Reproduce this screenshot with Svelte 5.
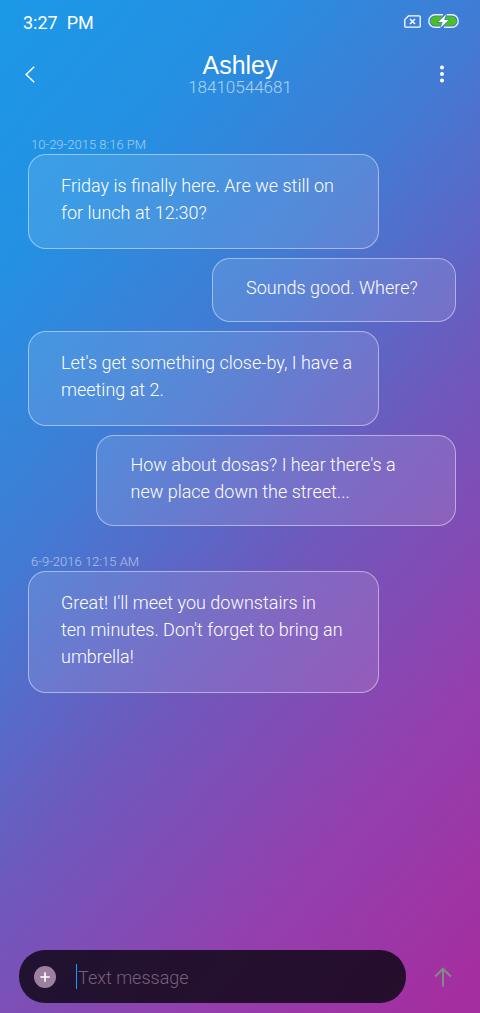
<script>
  const contact = { name: 'Ashley', phone: '18410544681' };

  const groups = [
    {
      time: '10-29-2015 8:16 PM',
      messages: [
        { text: 'Friday is finally here. Are we still on\nfor lunch at 12:30?' },
        { text: 'Sounds good. Where?', sent: true },
        { text: "Let's get something close-by, I have a\nmeeting at 2." },
        { text: "How about dosas? I hear there's a\nnew place down the street...", sent: true, wide: true }
      ]
    },
    {
      time: '6-9-2016 12:15 AM',
      messages: [
        { text: "Great! I'll meet you downstairs in\nten minutes. Don't forget to bring an\numbrella!" }
      ]
    }
  ];

  let draft = $state('');

  function handleSubmit(e) {
    e.preventDefault();
    draft = '';
  }
</script>

<div class="screen">
  <div class="status-bar">
    <span class="clock">3:27&nbsp; PM</span>
    <div class="status-icons">
      <svg width="17" height="13" viewBox="0 0 17 13" fill="none" stroke="#fff" aria-hidden="true">
        <path d="M4.600 .8H15.200a1 1 0 0 1 1 1v9.400a1 1 0 0 1-1 1H1.800a1 1 0 0 1-1-1V4.600z" stroke-width="1.300" stroke-linejoin="round" />
        <path d="M6 4l5 5M11 4L6 9" stroke-width="1.500" />
      </svg>
      <svg width="31" height="14" viewBox="0 0 31 14" fill="none" aria-hidden="true">
        <path d="M15 .8H7a6.200 6.200 0 0 0 0 12.400h6M18.500 .8H24a6.200 6.200 0 0 1 0 12.400H16" stroke="#e8f1ff" stroke-width="1.400" />
        <rect x="2.600" y="2.600" width="25.800" height="8.800" rx="4.400" fill="#4fc01a" />
        <path d="M18 .6L10.400 8h4.200l-1.800 5.600L20.600 6h-4.400z" fill="#fff" stroke="#3d80d6" stroke-width="1.400" paint-order="stroke" />
      </svg>
    </div>
  </div>

  <header class="header">
    <button class="icon-btn back" aria-label="Back">
      <svg width="10" height="17" viewBox="0 0 10 17" fill="none" stroke="#fff" stroke-width="1.500">
        <path d="M9.200 .8L1.200 8.500l8 7.700" />
      </svg>
    </button>
    <div class="contact">
      <h1>{contact.name}</h1>
      <p>{contact.phone}</p>
    </div>
    <button class="icon-btn" aria-label="More options">
      <svg width="4" height="18" viewBox="0 0 4 18" fill="#fff">
        <circle cx="2" cy="2.500" r="2" />
        <circle cx="2" cy="9" r="2" />
        <circle cx="2" cy="15.500" r="2" />
      </svg>
    </button>
  </header>

  <main class="thread">
    {#each groups as group}
      <section class="group">
        <time>{group.time}</time>
        {#each group.messages as message}
          <p class="bubble" class:sent={message.sent} class:wide={message.wide}>{message.text}</p>
        {/each}
      </section>
    {/each}
  </main>

  <form class="composer" onsubmit={handleSubmit}>
    <div class="field">
      <button type="button" aria-label="Add attachment">
        <svg width="22" height="22" viewBox="0 0 22 22">
          <circle cx="11" cy="11" r="11" fill="#9b80a0" />
          <path d="M11 6.300v9.400M6.300 11h9.400" stroke="#fff" stroke-width="1.600" />
        </svg>
      </button>
      <input type="text" placeholder="Text message" aria-label="Text message" bind:value={draft} />
    </div>
    <button type="submit" class="icon-btn" aria-label="Send">
      <svg width="18" height="20" viewBox="0 0 18 20" fill="none" stroke="#7f8c85" stroke-width="2">
        <path d="M9 19.500V2M1.200 9.500L9 1.700l7.800 7.800" />
      </svg>
    </button>
  </form>
</div>

<style>
:global(body) {
  margin: 0;
}

.screen {
  display: flex;
  flex-direction: column;
  box-sizing: border-box;
  min-height: 100vh;
  padding-bottom: 10px;
  background: linear-gradient(131deg, #1b99e7 0%, #2590e2 18%, #427bd4 37%, #6e59bd 57%, #9340ae 78%, #a42ea0 97%);
  color: #fff;
  font-family: Roboto, "Liberation Sans", sans-serif;
  font-weight: 300;
}

button {
  padding: 0;
  border: none;
  background: none;
  cursor: pointer;
}

svg {
  display: block;
}

.status-bar {
  display: flex;
  align-items: center;
  justify-content: space-between;
  height: 42px;
  padding: 0 21px 0 23px;
}

.clock {
  padding-top: 2px;
  font-size: 18px;
  font-weight: 400;
}

.status-icons {
  display: flex;
  align-items: center;
  gap: 7px;
}

.header {
  display: flex;
  align-items: center;
  justify-content: space-between;
  height: 64px;
  padding: 0 16px;
}

.icon-btn {
  display: flex;
  align-items: center;
  justify-content: center;
  width: 44px;
  height: 44px;
}

.icon-btn.back {
  width: 28px;
}

.contact {
  flex: 1;
  padding-left: 16px;
  text-align: center;
}

.contact h1 {
  margin: 0;
  font-family: "Liberation Sans", Arial, sans-serif;
  font-size: 25px;
  font-weight: 400;
  line-height: 26px;
}

.contact p {
  margin: 0;
  font-size: 17px;
  line-height: 18px;
  opacity: 0.6;
}

.thread {
  flex: 1;
  padding: 30px 24px 30px 28px;
}

.group {
  display: flex;
  flex-direction: column;
  align-items: flex-start;
  gap: 9px;
  margin-bottom: 27px;
}

.group time {
  margin: 0 0 -9px 3px;
  font-size: 13px;
  line-height: 18px;
  opacity: 0.55;
}

.bubble {
  box-sizing: border-box;
  width: 82%;
  margin: 0;
  padding: 17px 20px 22px 32px;
  border: 1px solid rgba(255, 255, 255, 0.45);
  border-radius: 18px;
  background: rgba(255, 255, 255, 0.11);
  font-size: 18px;
  line-height: 27px;
  white-space: pre-line;
}

.bubble.sent {
  align-self: flex-end;
  width: 57%;
  padding: 15px 20px 20px 33px;
}

.bubble.sent.wide {
  width: 84%;
}

.composer {
  display: flex;
  align-items: center;
  gap: 15px;
  padding: 0 15px 0 19px;
}

.field {
  display: flex;
  flex: 1;
  align-items: center;
  gap: 20px;
  height: 53px;
  padding: 0 20px 0 15px;
  border-radius: 26px;
  background: rgba(18, 8, 26, 0.86);
}

.field input {
  flex: 1;
  min-width: 0;
  height: 23px;
  padding: 2px 0 0 1px;
  border: none;
  border-left: 1px solid #1c9bef;
  outline: none;
  background: none;
  color: #fff;
  font: inherit;
  font-size: 18px;
}

.field input::placeholder {
  color: #76607c;
  opacity: 1;
}
</style>
